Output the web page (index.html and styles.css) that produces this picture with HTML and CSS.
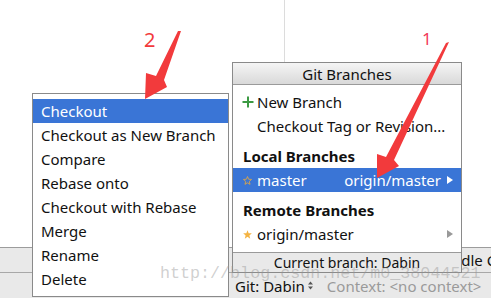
FILE: index.html
```html
<!DOCTYPE html>
<html>
<head>
<meta charset="utf-8">
<link rel="stylesheet" href="styles.css">
</head>
<body>
<div class="ide">
  <div class="editor">
    <div class="divider"></div>
  </div>
  <div class="toolbar"><span class="tool-label">Gradle Console</span></div>
  <div class="statusbar">
    <span class="git">Git: Dabin</span>
    <svg class="updown" width="5" height="9" viewBox="0 0 5 9"><path d="M0 3.5 L2.5 0.5 L5 3.5Z M0 5.5 L2.5 8.5 L5 5.5Z" fill="#555"/></svg>
    <span class="context">Context: &lt;no context&gt;</span>
  </div>
</div>

<div class="menu actions">
  <div class="item selected">Checkout</div>
  <div class="item">Checkout as New Branch</div>
  <div class="item">Compare</div>
  <div class="item">Rebase onto</div>
  <div class="item">Checkout with Rebase</div>
  <div class="item">Merge</div>
  <div class="item">Rename</div>
  <div class="item">Delete</div>
</div>

<div class="menu branches">
  <div class="title">Git Branches</div>
  <div class="list">
    <div class="row"><span class="icon"><svg width="12" height="12" viewBox="0 0 12 12"><path d="M6 0.5V11.5M0.5 6H11.5" stroke="#3c9a43" stroke-width="2"/></svg></span><span>New Branch</span></div>
    <div class="row"><span class="icon"></span><span>Checkout Tag or Revision...</span></div>
    <div class="group">Local Branches</div>
    <div class="row selected"><span class="icon star"><svg width="9" height="9" viewBox="0 0 10 10"><path d="M5 0.6 L6.2 3.6 L9.5 3.8 L7 6 L7.8 9.3 L5 7.5 L2.2 9.3 L3 6 L0.5 3.8 L3.8 3.6Z" fill="none" stroke="#d9a54b" stroke-width="1"/></svg></span><span class="name">master</span><span class="track">origin/master</span><span class="sub"><svg width="6" height="8" viewBox="0 0 6 8"><path d="M0 0 L6 4 L0 8Z" fill="#fff"/></svg></span></div>
    <div class="group">Remote Branches</div>
    <div class="row"><span class="icon star"><svg width="9" height="9" viewBox="0 0 10 10"><path d="M5 0.3 L6.3 3.5 L9.8 3.7 L7.1 6 L8 9.6 L5 7.6 L2 9.6 L2.9 6 L0.2 3.7 L3.7 3.5Z" fill="#f4b342"/></svg></span><span class="name">origin/master</span><span class="sub"><svg width="6" height="8" viewBox="0 0 6 8"><path d="M0 0 L6 4 L0 8Z" fill="#999"/></svg></span></div>
  </div>
  <div class="footer">Current branch: Dabin</div>
</div>

<div class="watermark">http://blog.csdn.net/m0_38044521</div>

<svg class="annotations" width="491" height="298" viewBox="0 0 491 298">
  <polygon points="181,31 164,80 167,87 145,99 146,73 156,76 178,31" fill="#f23a3c"/>
  <polygon points="449,42 394,160 399,166 377,178 377,154 386,157 446,43" fill="#f23a3c"/>
  <text x="144" y="47" class="num">2</text>
  <text x="422" y="45" class="num one">1</text>
</svg>
</body>
</html>
```

FILE: styles.css
```css
html, body {
  margin: 0;
  padding: 0;
}
body {
  width: 491px;
  height: 298px;
  position: relative;
  overflow: hidden;
  background: #fff;
  font-family: "Noto Sans", "Open Sans", sans-serif;
  font-size: 15px;
  color: #111;
}
.ide {
  display: flex;
  flex-direction: column;
  height: 298px;
}
.editor {
  height: 247px;
  background: #fff;
}
.divider {
  margin-left: 284px;
  width: 0;
  height: 62px;
  border-left: 1px solid #dcdcdc;
}
.toolbar {
  height: 24px;
  background: #e9e9e9;
  border-top: 1px solid #9c9c9c;
  border-bottom: 1px solid #a8a8a8;
  display: flex;
  align-items: center;
  overflow: hidden;
  white-space: nowrap;
}
.tool-label {
  margin-left: 436px;
  font-size: 15px;
}
.statusbar {
  flex: 1;
  background: #e9e9e9;
  display: flex;
  align-items: center;
  padding-left: 235px;
  white-space: nowrap;
}
.git {
  font-size: 15px;
}
.updown {
  margin-left: 3px;
}
.context {
  margin-left: 14px;
  color: #9a9a9a;
  font-size: 15px;
}

.menu {
  position: absolute;
  background: #fff;
  border: 1px solid #8a8a8a;
  box-sizing: border-box;
}
.actions {
  left: 32px;
  top: 93px;
  width: 197px;
  height: 204px;
  padding: 5px 0;
}
.actions .item {
  height: 24px;
  line-height: 24px;
  padding-left: 8px;
  white-space: nowrap;
}
.selected {
  background: #3a75d6;
  color: #fff;
}

.branches {
  left: 232px;
  top: 62px;
  width: 230px;
  height: 211px;
  display: flex;
  flex-direction: column;
}
.title {
  height: 22px;
  line-height: 22px;
  text-align: center;
  background: linear-gradient(#f5f5f5, #d9d9d9);
  border-bottom: 1px solid #9a9a9a;
  box-sizing: border-box;
}
.list {
  flex: 1;
  padding-top: 5px;
}
.row {
  height: 24px;
  display: flex;
  align-items: center;
  white-space: nowrap;
  padding-left: 9px;
}
.icon {
  width: 15px;
  display: flex;
  align-items: center;
}
.star {
  padding-left: 1px;
  width: 14px;
}
.name {
  flex: 1;
}
.track {
  margin-right: 6px;
}
.sub {
  width: 14px;
  display: flex;
  align-items: center;
}
.group {
  height: 24px;
  line-height: 24px;
  margin-top: 6px;
  padding-left: 10px;
  font-weight: bold;
}
.footer {
  height: 20px;
  line-height: 19px;
  text-align: center;
  font-size: 14px;
  background: #e9e9e9;
  border-top: 1px solid #9a9a9a;
  box-sizing: border-box;
}

.watermark {
  position: absolute;
  left: 160px;
  top: 264px;
  font-family: "Liberation Mono", monospace;
  font-size: 16.7px;
  color: rgba(150, 150, 150, 0.45);
  white-space: nowrap;
  pointer-events: none;
}
.annotations {
  position: absolute;
  left: 0;
  top: 0;
  pointer-events: none;
}
.num {
  font-family: "Noto Sans", sans-serif;
  font-size: 20px;
  fill: #f23a3c;
}
.one {
  font-size: 17px;
  fill: #f2395a;
}
```
